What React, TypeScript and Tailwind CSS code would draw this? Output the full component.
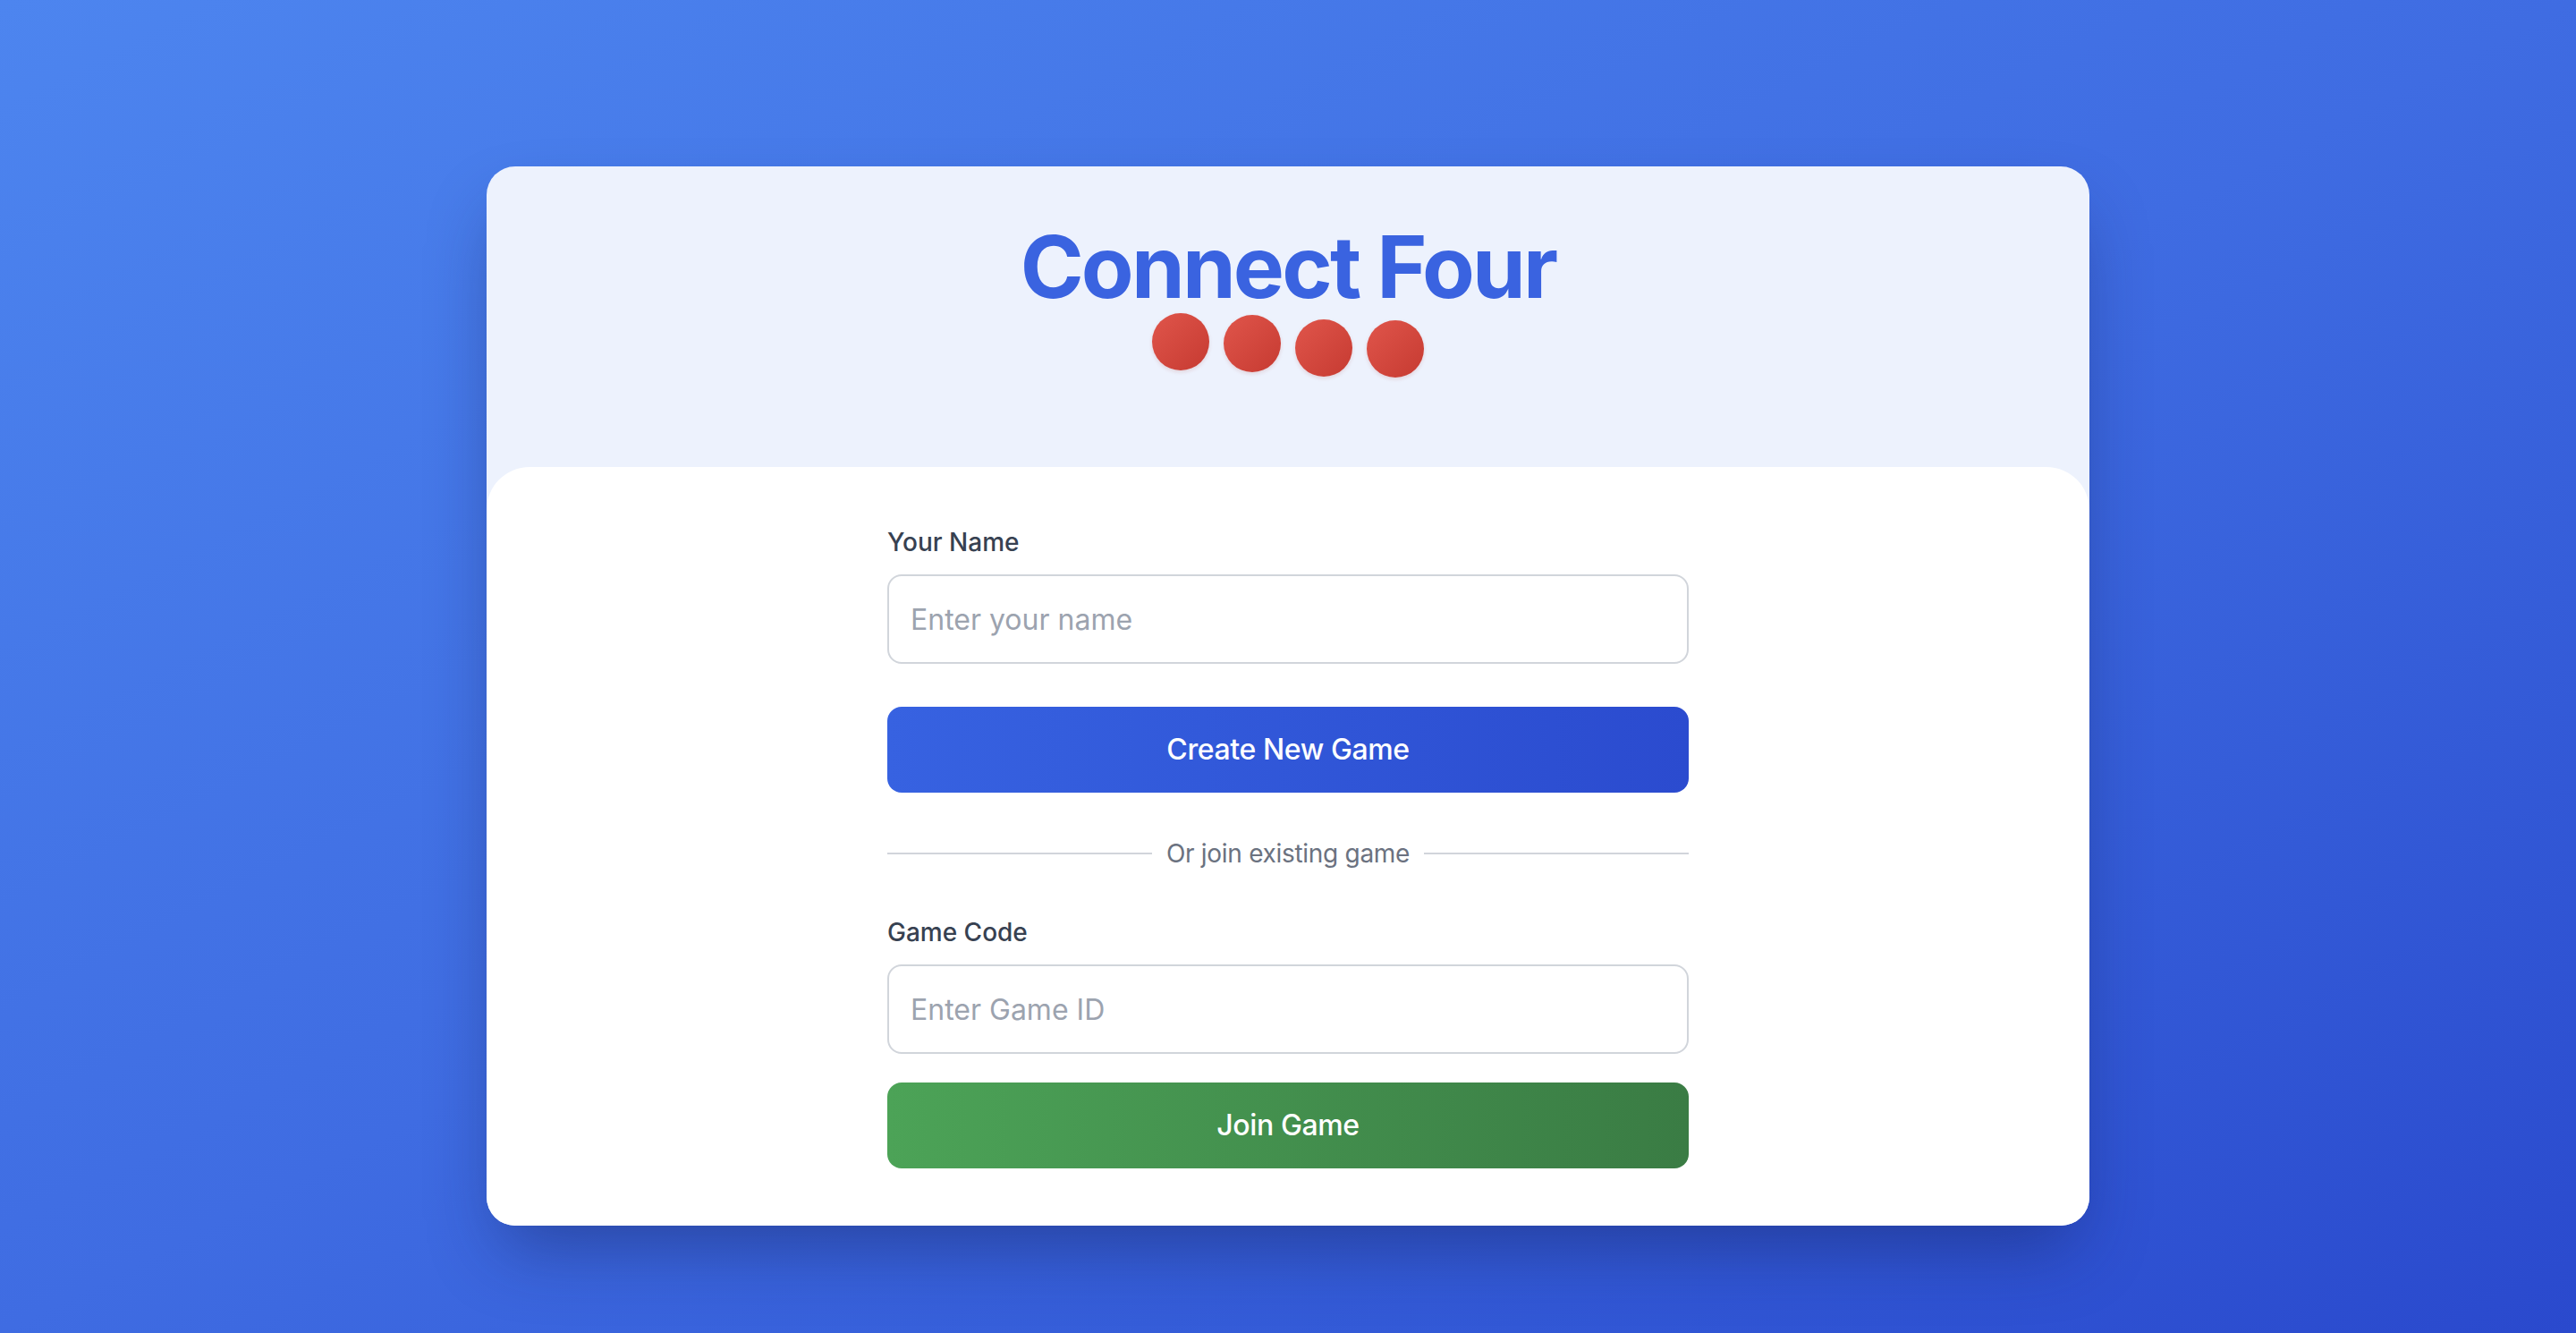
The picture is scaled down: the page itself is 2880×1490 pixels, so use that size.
import { useState } from 'react'

// Staggered vertical offsets for the four discs under the title
const discs = ['translate-y-0', 'translate-y-[2px]', 'translate-y-[7px]', 'translate-y-[8px]']

function Disc({ offset }: { offset: string }) {
  return (
    <div
      className={`h-16 w-16 rounded-full bg-gradient-to-br from-[#e0554b] to-[#c63a31] shadow-[0_2px_4px_rgba(160,40,30,0.15)] ${offset}`}
    />
  )
}

function Divider() {
  return (
    <div className="flex items-center">
      <div className="h-[2px] flex-1 bg-[#d1d5db]" />
      <span className="px-4 text-[28px] leading-[40px] tracking-[-0.3px] text-[#6b7280]">Or join existing game</span>
      <div className="h-[2px] flex-1 bg-[#d1d5db]" />
    </div>
  )
}

export default function App() {
  const [name, setName] = useState('')
  const [gameId, setGameId] = useState('')

  return (
    <div
      className="min-h-screen w-full bg-gradient-to-br from-[#4d85ef] via-[#3f6ce2] to-[#2a49cd] pt-[186px] pb-[120px]"
      style={{ fontFamily: 'Inter, "Noto Sans", sans-serif' }}
    >
      <div className="mx-auto w-[1792px] overflow-hidden rounded-[32px] bg-[#edf2fd] shadow-[0_40px_80px_-16px_rgba(20,30,90,0.45)]">
        <div className="flex h-[336px] flex-col items-center pt-16">
          <h1 className="text-[96px] font-bold leading-none tracking-[-2.8px] text-[#3a63e0]">Connect Four</h1>
          <div className="mt-1 flex gap-4">
            {discs.map((d, i) => (
              <Disc key={i} offset={d} />
            ))}
          </div>
        </div>

        <div className="rounded-t-[48px] bg-white px-16 py-16">
          <div className="mx-auto flex w-[896px] flex-col">
            <label className="mb-4 text-[28px] font-medium leading-[40px] text-[#374151]">Your Name</label>
            <input
              value={name}
              onChange={(e) => setName(e.target.value)}
              placeholder="Enter your name"
              className="h-[100px] w-full rounded-2xl border-2 border-[#d1d5db] px-6 text-[32px] text-[#111827] outline-none placeholder:text-[#9ca3af]"
            />

            <button className="mt-12 h-24 w-full rounded-2xl bg-gradient-to-r from-[#3762e1] to-[#2b4bcf] text-[32px] font-medium tracking-[-0.4px] text-white">
              Create New Game
            </button>

            <div className="mt-12">
              <Divider />
            </div>

            <label className="mt-12 mb-4 text-[28px] font-medium leading-[40px] text-[#374151]">Game Code</label>
            <input
              value={gameId}
              onChange={(e) => setGameId(e.target.value)}
              placeholder="Enter Game ID"
              className="h-[100px] w-full rounded-2xl border-2 border-[#d1d5db] px-6 text-[32px] text-[#111827] outline-none placeholder:text-[#9ca3af]"
            />

            <button className="mt-8 h-24 w-full rounded-2xl bg-gradient-to-r from-[#4ca357] to-[#3a7c44] text-[32px] font-medium tracking-[-0.4px] text-white">
              Join Game
            </button>
          </div>
        </div>
      </div>
    </div>
  )
}
